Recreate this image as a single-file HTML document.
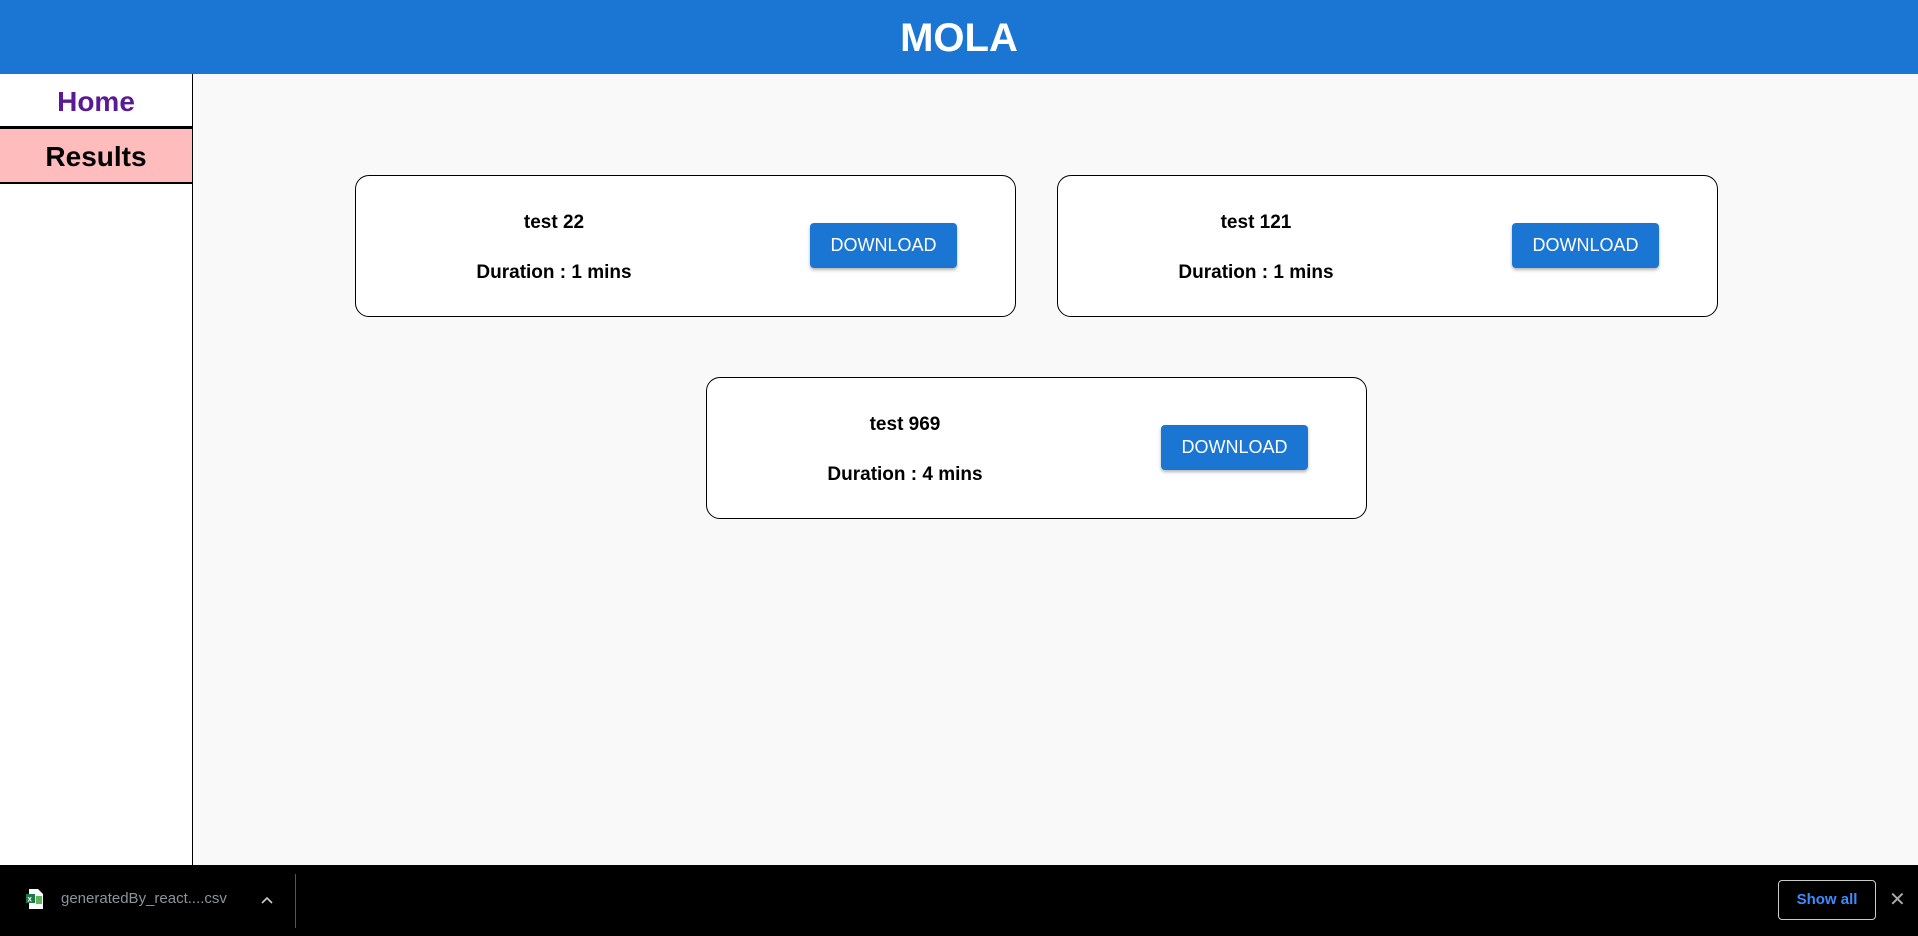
<!DOCTYPE html>
<html><head><style>
*{margin:0;padding:0;box-sizing:border-box}
body{width:1918px;height:936px;overflow:hidden;background:#f9f9f9;font-family:"Liberation Sans",sans-serif;position:relative}
.hdr{position:absolute;left:0;top:0;width:1918px;height:74px;background:#1a76d2;color:#fff;font-weight:bold;font-size:40px;text-align:center;line-height:76px}
.side{position:absolute;left:0;top:74px;width:193px;height:791px;background:#fff;border-right:1px solid #000}
.nav{height:54px;text-align:center;font-weight:bold;font-size:28px;line-height:56px}
.home{color:#5a1a94;border-bottom:3px solid #000;height:55px}
.res{background:#ffbcbc;border-bottom:2px solid #000;height:55px}
.card{position:absolute;width:661px;height:142px;background:#fff;border:1px solid #000;border-radius:14px}
.t{position:absolute;left:0;width:396px;text-align:center;font-weight:bold;font-size:19px;color:#000}
.t1{top:36px}.t2{top:86px}
.btn{position:absolute;left:454px;top:47px;width:147px;height:45px;background:#1a76d2;color:#fff;border-radius:4px;font-size:18px;text-align:center;line-height:45px;box-shadow:0 2px 3px rgba(0,0,0,.3)}
.bar{position:absolute;left:0;top:865px;width:1918px;height:71px;background:#000}
</style></head><body>
<div class="hdr">MOLA</div>
<div class="side"><div class="nav home">Home</div><div class="nav res">Results</div></div>
<div class="card" style="left:355px;top:175px"><div class="t t1">test 22</div><div class="t t2">Duration : 1 mins</div><div class="btn">DOWNLOAD</div></div>
<div class="card" style="left:1057px;top:175px"><div class="t t1">test 121</div><div class="t t2">Duration : 1 mins</div><div class="btn">DOWNLOAD</div></div>
<div class="card" style="left:706px;top:377px"><div class="t t1">test 969</div><div class="t t2">Duration : 4 mins</div><div class="btn">DOWNLOAD</div></div>
<div class="bar">
<svg style="position:absolute;left:26px;top:24px" width="17" height="20" viewBox="0 0 17 20"><path d="M3 0h9l5 5v15H3z" fill="#fff"/><rect x="0" y="5" width="9" height="9" fill="#1d7a45"/><text x="1.5" y="12.5" font-size="8" fill="#fff" font-family="Liberation Sans" font-weight="bold">x</text><rect x="10" y="7" width="6" height="8" fill="#5cb85c"/></svg>
<div style="position:absolute;left:61px;top:25px;color:#8a949c;font-size:15px">generatedBy_react....csv</div>
<svg style="position:absolute;left:261px;top:31px" width="12" height="8" viewBox="0 0 12 8"><path d="M1 7l5-5 5 5" stroke="#ccc" stroke-width="1.6" fill="none"/></svg>
<div style="position:absolute;left:295px;top:9px;width:1px;height:54px;background:#555"></div>
<div style="position:absolute;left:1778px;top:15px;width:98px;height:40px;border:1px solid #ccc;border-radius:4px;color:#3c8cff;font-size:15px;text-align:center;line-height:38px;font-weight:bold">Show all</div>
<div style="position:absolute;left:1889px;top:22px;color:#aaa;font-size:20px">✕</div>
</div>
</body></html>
